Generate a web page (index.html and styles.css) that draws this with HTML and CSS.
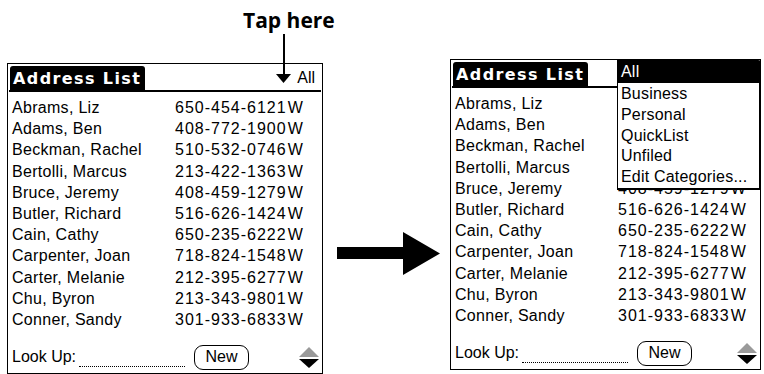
FILE: index.html
```html
<!DOCTYPE html>
<html lang="en">
<head>
    <meta charset="UTF-8">
    <title>Address List - category popup</title>
    <link rel="stylesheet" href="styles.css">
</head>
<body>
<div class="page">
    <div class="col">
        <div class="callout"><span class="callout-text">Tap here</span></div>
        <div class="screen">
            <div class="title-bar">
                <span class="title-tab">Address List</span>
                <span class="category">
                    <svg width="15" height="9" viewBox="0 0 15 9"><polygon points="0,0 15,0 7.5,9" fill="#000"/></svg>All
                </span>
            </div>
            <div class="list">
                <div class="row"><span>Abrams, Liz</span><span class="phone">650-454-6121<b>W</b></span></div>
                <div class="row"><span>Adams, Ben</span><span class="phone">408-772-1900<b>W</b></span></div>
                <div class="row"><span>Beckman, Rachel</span><span class="phone">510-532-0746<b>W</b></span></div>
                <div class="row"><span>Bertolli, Marcus</span><span class="phone">213-422-1363<b>W</b></span></div>
                <div class="row"><span>Bruce, Jeremy</span><span class="phone">408-459-1279<b>W</b></span></div>
                <div class="row"><span>Butler, Richard</span><span class="phone">516-626-1424<b>W</b></span></div>
                <div class="row"><span>Cain, Cathy</span><span class="phone">650-235-6222<b>W</b></span></div>
                <div class="row"><span>Carpenter, Joan</span><span class="phone">718-824-1548<b>W</b></span></div>
                <div class="row"><span>Carter, Melanie</span><span class="phone">212-395-6277<b>W</b></span></div>
                <div class="row"><span>Chu, Byron</span><span class="phone">213-343-9801<b>W</b></span></div>
                <div class="row"><span>Conner, Sandy</span><span class="phone">301-933-6833<b>W</b></span></div>
            </div>
            <div class="footer">
                <span>Look Up:</span>
                <span class="lookup-line"></span>
                <span class="btn">New</span>
                <span class="scroll">
                    <svg width="20" height="10" viewBox="0 0 20 10"><polygon points="10,0 20,10 0,10" fill="#9a9a9a"/></svg>
                    <svg width="20" height="9" viewBox="0 0 20 9"><polygon points="0,0 20,0 10,9" fill="#000"/></svg>
                </span>
            </div>
        </div>
    </div>

    <div class="between">
        <svg class="big-arrow" width="103" height="43" viewBox="0 0 103 43">
            <polygon points="0,15 66,15 66,0 103,21.5 66,43 66,27 0,27" fill="#000"/>
        </svg>
    </div>

    <div class="col col-after">
        <div class="screen">
            <div class="title-bar">
                <span class="title-tab">Address List</span>
            </div>
            <!-- rows under the open popup only show their names -->
            <div class="list">
                <div class="row"><span>Abrams, Liz</span></div>
                <div class="row"><span>Adams, Ben</span></div>
                <div class="row"><span>Beckman, Rachel</span></div>
                <div class="row"><span>Bertolli, Marcus</span></div>
                <div class="row"><span>Bruce, Jeremy</span><span class="phone">408-459-1279<b>W</b></span></div>
                <div class="row"><span>Butler, Richard</span><span class="phone">516-626-1424<b>W</b></span></div>
                <div class="row"><span>Cain, Cathy</span><span class="phone">650-235-6222<b>W</b></span></div>
                <div class="row"><span>Carpenter, Joan</span><span class="phone">718-824-1548<b>W</b></span></div>
                <div class="row"><span>Carter, Melanie</span><span class="phone">212-395-6277<b>W</b></span></div>
                <div class="row"><span>Chu, Byron</span><span class="phone">213-343-9801<b>W</b></span></div>
                <div class="row"><span>Conner, Sandy</span><span class="phone">301-933-6833<b>W</b></span></div>
            </div>
            <div class="footer">
                <span>Look Up:</span>
                <span class="lookup-line"></span>
                <span class="btn">New</span>
                <span class="scroll">
                    <svg width="20" height="10" viewBox="0 0 20 10"><polygon points="10,0 20,10 0,10" fill="#9a9a9a"/></svg>
                    <svg width="20" height="9" viewBox="0 0 20 9"><polygon points="0,0 20,0 10,9" fill="#000"/></svg>
                </span>
            </div>

            <ul class="popup">
                <li class="current">All</li>
                <li>Business</li>
                <li>Personal</li>
                <li>QuickList</li>
                <li>Unfiled</li>
                <li>Edit Categories...</li>
            </ul>
        </div>
    </div>
</div>
</body>
</html>
```

FILE: styles.css
```css
body {
    margin: 0;
    background-color: #fff;
    color: #000;
    font-family: "Liberation Sans", Arial, sans-serif;
    font-size: 16px;
}

.page {
    display: flex;
    align-items: flex-start;
    padding-left: 7px;
}

.col {
    width: 316px;
}

.col-after {
    width: 311px;
    margin-top: 59px;
}

.between {
    width: 127px;
}

.big-arrow {
    display: block;
    margin: 232px 0 0 14px;
}

/* "Tap here" callout */
.callout {
    position: relative;
    height: 63px;
    padding-left: 236px;
    white-space: nowrap;
}

.callout-text {
    display: block;
    padding-top: 6px;
    font-family: "Open Sans", sans-serif;
    font-weight: 700;
    font-size: 21px;
    line-height: 28px;
}

.callout::after {
    content: "";
    position: absolute;
    left: 276px;
    top: 34px;
    width: 2px;
    height: 40px;
    background-color: #000;
}

/* palm screen */
.screen {
    position: relative;
    height: 311px;
    box-sizing: border-box;
    border: 1px solid #000;
    display: flex;
    flex-direction: column;
}

.title-bar {
    display: flex;
    justify-content: space-between;
    align-items: flex-end;
    min-height: 24px;
    margin: 2px 1px 0;
    border-bottom: 2px solid #000;
}

.title-tab {
    height: 24px;
    line-height: 25px;
    margin-left: 1px;
    padding: 0 4px 0 3px;
    background-color: #000;
    color: #fff;
    border-radius: 3px 3px 0 0;
    font-family: "DejaVu Sans", sans-serif;
    font-weight: bold;
    font-size: 16px;
    letter-spacing: 1.4px;
}

.category {
    display: flex;
    align-items: center;
    gap: 6px;
    height: 24px;
    padding-right: 6px;
}

.list {
    padding: 5px 0 0 4px;
}

.row {
    display: grid;
    grid-template-columns: 163px auto;
    height: 21.2px;
    line-height: 21px;
    letter-spacing: 0.3px;
}

.phone {
    letter-spacing: 1px;
}

.phone b {
    font-weight: normal;
    margin-left: 1px;
    letter-spacing: 0;
}

.footer {
    display: flex;
    align-items: center;
    height: 26px;
    margin: auto 0 3px;
    padding-left: 4px;
}

.lookup-line {
    align-self: flex-end;
    width: 106px;
    height: 0;
    margin: 0 0 3px 3px;
    border-bottom: 1px dotted #000;
}

.btn {
    width: 55px;
    height: 25px;
    box-sizing: border-box;
    margin-left: 9px;
    border: 1.5px solid #000;
    border-radius: 9px;
    text-align: center;
    line-height: 22px;
}

.scroll {
    display: flex;
    flex-direction: column;
    gap: 2px;
    margin-left: auto;
    margin-right: 3px;
}

.scroll svg {
    display: block;
}

/* category popup */
.popup {
    position: absolute;
    top: 0;
    left: 166px;
    right: -1px;
    margin: 0;
    padding: 0 0 1px;
    list-style: none;
    background-color: #fff;
    border: 1px solid #000;
    border-width: 1px 2px 2px 1px;
    border-radius: 0 3px 0 0;
}

.popup li {
    height: 20.8px;
    line-height: 21px;
    padding-left: 3px;
    letter-spacing: 0.2px;
}

.popup .current {
    height: 22px;
    line-height: 22px;
    background-color: #000;
    color: #fff;
}
```
